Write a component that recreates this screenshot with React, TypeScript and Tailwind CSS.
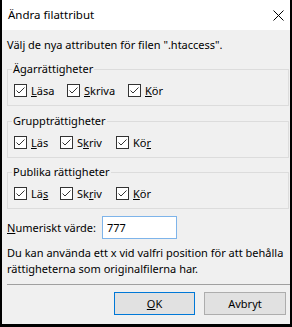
import React from "react";

function Box() {
  return (
    <svg width="13" height="13" viewBox="0 0 13 13" className="shrink-0">
      <rect x="0.5" y="0.5" width="12" height="12" fill="#ffffff" stroke="#333333" />
      <polyline points="2.5,6.5 5,9 10.5,3.5" fill="none" stroke="#333333" strokeWidth="1" />
    </svg>
  );
}

function Check({ w, children }: { w: string; children: React.ReactNode }) {
  return (
    <div className={`flex items-center ${w}`}>
      <Box />
      <span className="ml-[4px] leading-[16px] whitespace-nowrap">{children}</span>
    </div>
  );
}

function Group({ title, children, className }: { title: string; children: React.ReactNode; className: string }) {
  return (
    <fieldset className={`ml-[5px] w-[282px] border border-[#dcdcdc] ${className}`}>
      <legend className="ml-[4px] px-[1px] leading-[16px] whitespace-nowrap">{title}</legend>
      <div className="flex h-[15px] items-center pl-[6px] mt-[6px] mb-[7px]">{children}</div>
    </fieldset>
  );
}

export default function App() {
  return (
    <div className="w-[292px] h-[327px] bg-black pl-[2px] pr-[2px] pb-[3px] font-['Noto_Sans',sans-serif] text-[11px] text-black">
      <div className="flex h-full w-full flex-col overflow-hidden bg-[#f0f0f0]">
        <div className="flex h-[30px] shrink-0 items-center justify-between bg-white pl-[6px] pr-[6px]">
          <span className="text-[11.5px] leading-[16px]">Ändra filattribut</span>
          <svg width="11" height="11" viewBox="0 0 11 11">
            <path d="M0.5 0.5 L10.5 10.5 M10.5 0.5 L0.5 10.5" stroke="#000000" strokeWidth="1" fill="none" />
          </svg>
        </div>
        <div className="mt-[7px] ml-[5px] leading-[16px] whitespace-nowrap">
          Välj de nya attributen för filen ".htaccess".
        </div>
        <Group title="Ägarrättigheter" className="mt-[8px]">
          <Check w="w-[53px]"><u>L</u>äsa</Check>
          <Check w="w-[61px]"><u>S</u>kriva</Check>
          <Check w="w-[50px]"><u>K</u>ör</Check>
        </Group>
        <Group title="Gruppträttigheter" className="mt-[7px]">
          <Check w="w-[46px]"><u>L</u>äs</Check>
          <Check w="w-[56px]">S<u>k</u>riv</Check>
          <Check w="w-[50px]">Kö<u>r</u></Check>
        </Group>
        <Group title="Publika rättigheter" className="mt-[6px]">
          <Check w="w-[46px]">Lä<u>s</u></Check>
          <Check w="w-[56px]">Sk<u>r</u>iv</Check>
          <Check w="w-[50px]"><u>K</u>ör</Check>
        </Group>
        <div className="mt-[7px] ml-[5px] flex h-[23px] items-center">
          <span className="w-[95px] leading-[16px] whitespace-nowrap"><u>N</u>umeriskt värde:</span>
          <div className="flex h-[23px] w-[75px] items-center border border-[#7eb4ea] bg-white pl-[4px] leading-[16px]">777</div>
        </div>
        <div className="mt-[6px] ml-[5px] leading-[16px] whitespace-nowrap">
          <div>Du kan använda ett x vid valfri position för att behålla</div>
          <div>rättigheterna som originalfilerna har.</div>
        </div>
        <div className="mt-[7px] ml-[5px] h-px w-[400px] shrink-0 bg-[#a0a0a0]" />
        <div className="mt-[7px] flex justify-end gap-[9px] pr-[4px]">
          <div className="flex h-[23px] w-[81px] items-center justify-center border border-[#0078d7] bg-[#e1e1e1] leading-[16px]">
            <span><u>O</u>K</span>
          </div>
          <div className="flex h-[23px] w-[82px] items-center justify-center border border-[#adadad] bg-[#e1e1e1] leading-[16px]">
            Avbryt
          </div>
        </div>
      </div>
    </div>
  );
}
